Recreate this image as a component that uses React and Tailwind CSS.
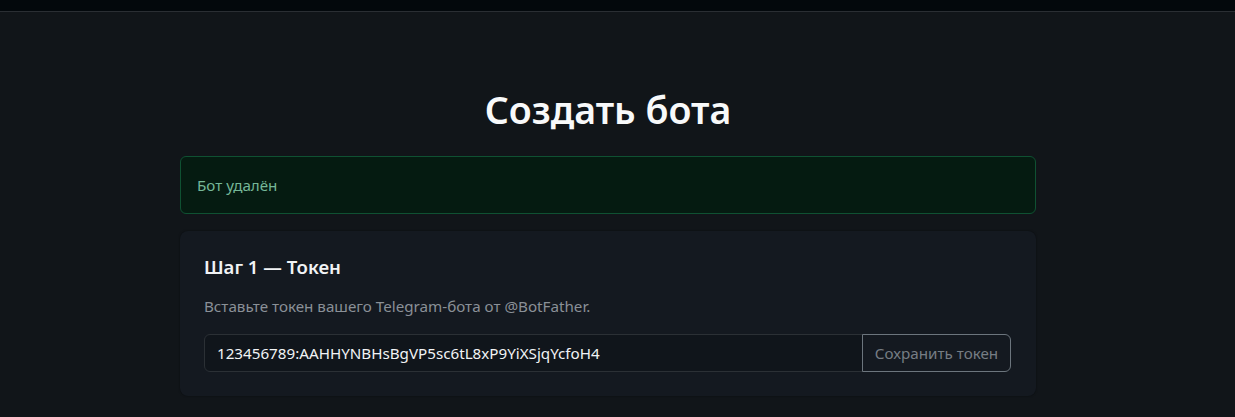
export default function App() {
  return (
    <div className="min-h-[417px] bg-[#111519] font-['Noto_Sans',sans-serif] text-[#dee2e6]">
      {/* top navbar strip */}
      <div className="h-[12px] bg-[#03080c] border-b border-[#2a2e33]" />

      <main className="pl-[180px] pt-[74px]">
        <div className="w-[856px]">
          <h1 className="text-center text-[37.6px] leading-[48px] font-semibold text-[#f8f9fa] mb-[22px]">
            Создать бота
          </h1>

          <div className="rounded-md border border-[#0f5132] bg-[#051b11] px-4 py-4 text-[15.2px] leading-6 text-[#75b798] mb-[17px]">
            Бот удалён
          </div>

          <div className="rounded-lg bg-[#141920] p-6 shadow-[0_0_2px_rgba(0,0,0,0.5)]">
            <h5 className="text-[18.6px] leading-6 font-semibold text-[#f1f3f5] mb-[15px]">
              Шаг 1 — Токен
            </h5>
            <p className="text-[15.2px] leading-6 text-[#8a9097] mb-4">
              Вставьте токен вашего Telegram-бота от @BotFather.
            </p>
            <div className="flex w-[807px]">
              <input
                className="flex-1 min-w-0 h-[38px] rounded-l-md border border-[#2b3035] bg-[#10151b] px-3 text-[15.2px] text-[#f1f3f5] outline-none"
                defaultValue="123456789:AAHHYNBHsBgVP5sc6tL8xP9YiXSjqYcfoH4"
              />
              <button className="shrink-0 whitespace-nowrap h-[38px] w-[149px] -ml-px rounded-r-md border border-[#6c757d] text-[15.2px] text-[#767d84]">
                Сохранить токен
              </button>
            </div>
          </div>
        </div>
      </main>
    </div>
  );
}
